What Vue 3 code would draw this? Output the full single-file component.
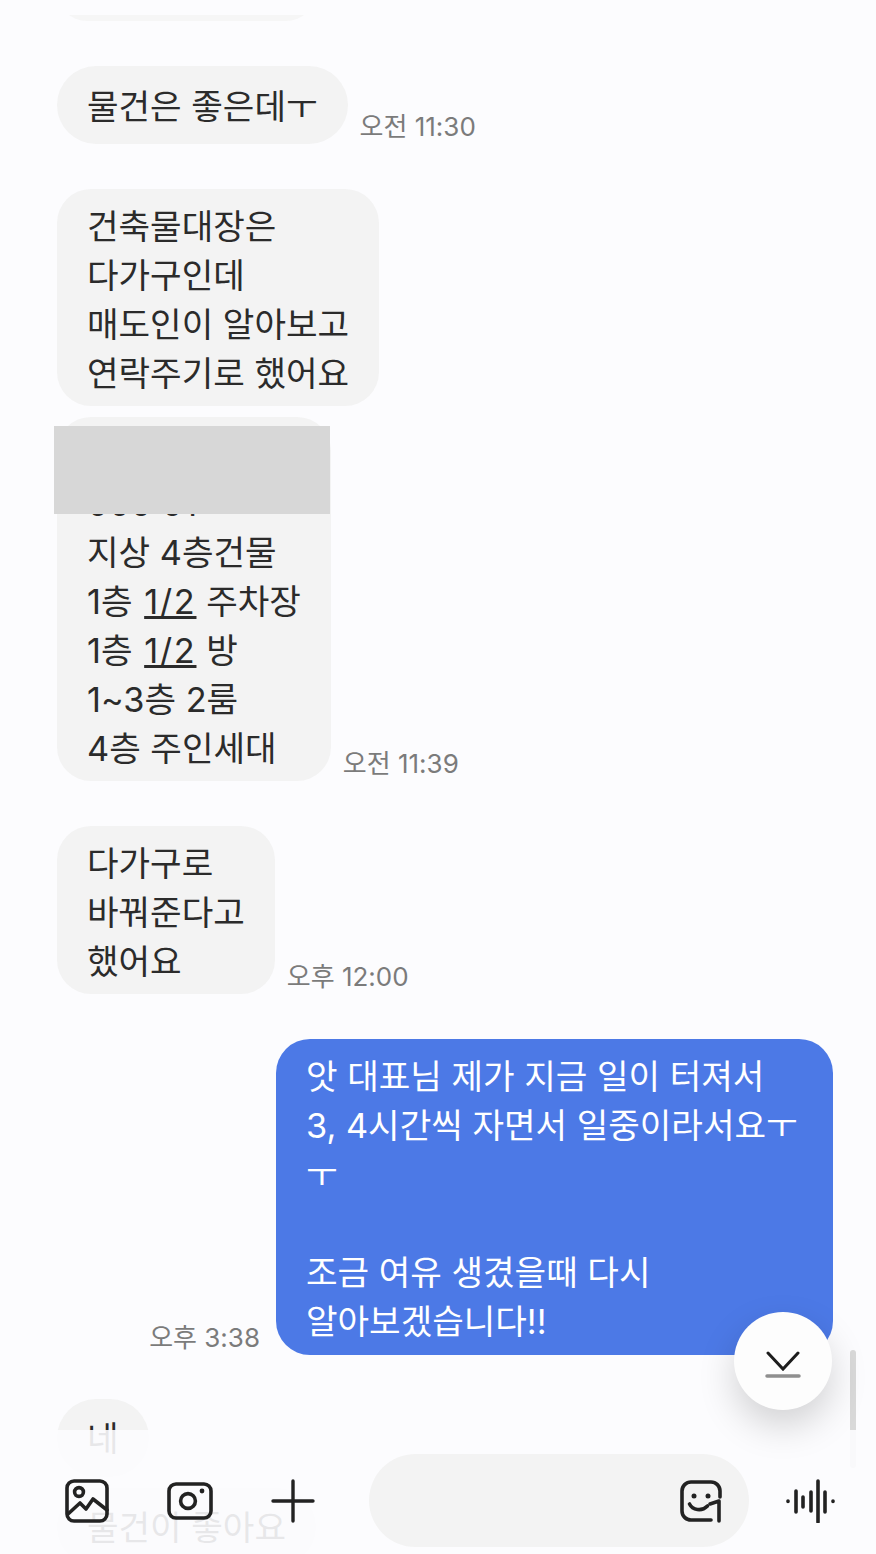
<script setup>
</script>

<template>
    <div class="phone">
        <div class="messages">
            <div class="row row-cut">
                <div class="bubble cut-bubble"></div>
            </div>

            <div class="row">
                <div class="bubble single">물건은 좋은데ㅜ</div>
                <span class="time">오전 11:30</span>
            </div>

            <div class="row">
                <div class="bubble">건축물대장은<br>다가구인데<br>매도인이 알아보고<br>연락주기로 했어요</div>
            </div>

            <div class="row row-close">
                <div class="bubble">
                    &nbsp;<br>
                    000 01<br>
                    지상 4층건물<br>
                    1층 <u>1/2</u> 주차장<br>
                    1층 <u>1/2</u> 방<br>
                    1~3층 2룸<br>
                    4층 주인세대
                    <div class="redact"></div>
                </div>
                <span class="time">오전 11:39</span>
            </div>

            <div class="row">
                <div class="bubble">다가구로<br>바꿔준다고<br>했어요</div>
                <span class="time">오후 12:00</span>
            </div>

            <div class="row row-mine">
                <span class="time">오후 3:38</span>
                <div class="bubble mine">앗 대표님 제가 지금 일이 터져서<br>3, 4시간씩 자면서 일중이라서요ㅜ<br>ㅜ<br><br>조금 여유 생겼을때 다시<br>알아보겠습니다!!</div>
            </div>

            <div class="row row-last">
                <div class="bubble single">네</div>
            </div>

            <div class="row row-tight">
                <div class="bubble single">물건이 좋아요</div>
            </div>
        </div>

        <div class="top-fade"></div>
        <div class="scrollbar"></div>

        <div class="composer">
            <svg class="ic-image" width="44" height="44" viewBox="0 0 44 44" fill="none" stroke="#222" stroke-width="3.6" stroke-linecap="round" stroke-linejoin="round">
                <rect x="2" y="2" width="40" height="40" rx="7" />
                <circle cx="14" cy="13" r="4.4" />
                <path d="M3 35l12-11 6 6 7-10 14 11" />
            </svg>
            <svg class="ic-camera" width="46" height="38" viewBox="0 0 46 38" fill="none" stroke="#222" stroke-width="3.6">
                <rect x="2" y="2" width="42" height="34" rx="7" />
                <circle cx="21" cy="19" r="7.4" />
                <circle cx="35" cy="9" r="2.4" fill="#222" stroke="none" />
            </svg>
            <svg class="ic-plus" width="44" height="44" viewBox="0 0 44 44" fill="none" stroke="#222" stroke-width="3.4" stroke-linecap="round">
                <path d="M22 2v40M2 22h40" />
            </svg>

            <div class="input-pill">
                <svg width="42" height="44" viewBox="0 0 42 44" fill="none" stroke="#222" stroke-width="3.6" stroke-linecap="round" stroke-linejoin="round">
                    <path d="M40 18V12a9 9 0 0 0-9-9H11a9 9 0 0 0-9 9v20a9 9 0 0 0 9 9h20" />
                    <circle cx="14" cy="17" r="2.5" fill="#222" stroke="none" />
                    <circle cx="28" cy="17" r="2.5" fill="#222" stroke="none" />
                    <path d="M9.500 25c3 6 12 8 18 2" />
                    <path d="M30 25l9-3v20" />
                </svg>
            </div>

            <svg class="ic-voice" width="50" height="44" viewBox="0 0 50 44" fill="none" stroke="#222" stroke-width="3.6" stroke-linecap="round">
                <path d="M3 22v.5M11 12v21M18 18v10M26 13v19M33 2v41M40 13v20M48 22v.5" />
            </svg>
        </div>

        <button class="to-bottom">
            <svg width="36" height="28" viewBox="0 0 36 28" fill="none" stroke-linecap="round">
                <path d="M3 2l15 16L33 2" stroke="#1d1d1d" stroke-width="3" />
                <path d="M2 25h32" stroke="#8f8f8f" stroke-width="3.500" />
            </svg>
        </button>
    </div>
</template>

<style scoped>
.phone {
    position: relative;
    width: 876px;
    height: 1554px;
    overflow: hidden;
    background: #fcfcfe;
    font-family: Inter, "Noto Sans CJK KR", "Noto Sans", sans-serif;
    color: #2b2b2b;
}

.messages {
    display: flex;
    flex-direction: column;
    padding: 0 43px 0 57px;
}

.row {
    display: flex;
    align-items: flex-end;
    gap: 12px;
    margin-top: 45px;
}

.row-cut {
    margin-top: -39px;
}

.row-close {
    margin-top: 11px;
}

.row-mine {
    justify-content: flex-end;
    gap: 16px;
}

.row-last {
    margin-top: 44px;
}

.row-tight {
    margin-top: 11px;
}

.bubble {
    position: relative;
    padding: 12.5px 30px 8.5px;
    border-radius: 34px;
    background: #f3f3f3;
    font-size: 34.3px;
    line-height: 49px;
    white-space: nowrap;
}

.bubble u {
    margin-left: 2px;
    letter-spacing: 1.7px;
}

.single {
    display: flex;
    align-items: center;
    min-height: 78px;
    box-sizing: border-box;
    padding-top: 11.5px;
    padding-bottom: 9.5px;
    border-radius: 39px;
}

.cut-bubble {
    width: 259px;
    height: 60px;
    box-sizing: border-box;
    background: #f6f6f6;
}

.mine {
    box-sizing: border-box;
    width: 557px;
    padding-bottom: 9px;
    background: #4c79e6;
    color: #fff;
}

.time {
    margin-bottom: -1px;
    font-size: 26px;
    line-height: 36px;
    color: #7b7b7b;
    white-space: nowrap;
}

.redact {
    position: absolute;
    top: 9px;
    left: -3px;
    width: 276px;
    height: 88px;
    background: #d7d7d7;
}

.top-fade {
    position: absolute;
    top: 0;
    left: 0;
    right: 0;
    height: 15px;
    background: #fcfcfe;
}

.scrollbar {
    position: absolute;
    top: 1350px;
    left: 850px;
    width: 6px;
    height: 118px;
    border-radius: 3px;
    background: #d9d9d9;
}

.composer {
    position: absolute;
    left: 0;
    right: 0;
    bottom: 0;
    height: 124px;
    box-sizing: border-box;
    display: flex;
    align-items: center;
    padding: 17px 0 0 65px;
    background: rgba(252, 252, 254, 0.9);
}

.ic-camera {
    margin-left: 58px;
}

.ic-plus {
    margin-left: 58px;
}

.input-pill {
    display: flex;
    align-items: center;
    justify-content: flex-end;
    box-sizing: border-box;
    width: 380px;
    height: 93px;
    margin-left: 54px;
    padding-right: 27px;
    border-radius: 47px;
    background: #f3f3f3;
}

.ic-voice {
    margin-left: 36px;
}

.to-bottom {
    position: absolute;
    top: 1312px;
    left: 734px;
    display: flex;
    align-items: center;
    justify-content: center;
    width: 98px;
    height: 98px;
    padding: 8px 0 0;
    border: none;
    border-radius: 50%;
    background: #fdfdfd;
    box-shadow: 0 16px 36px rgba(0, 0, 0, 0.17);
}
</style>
